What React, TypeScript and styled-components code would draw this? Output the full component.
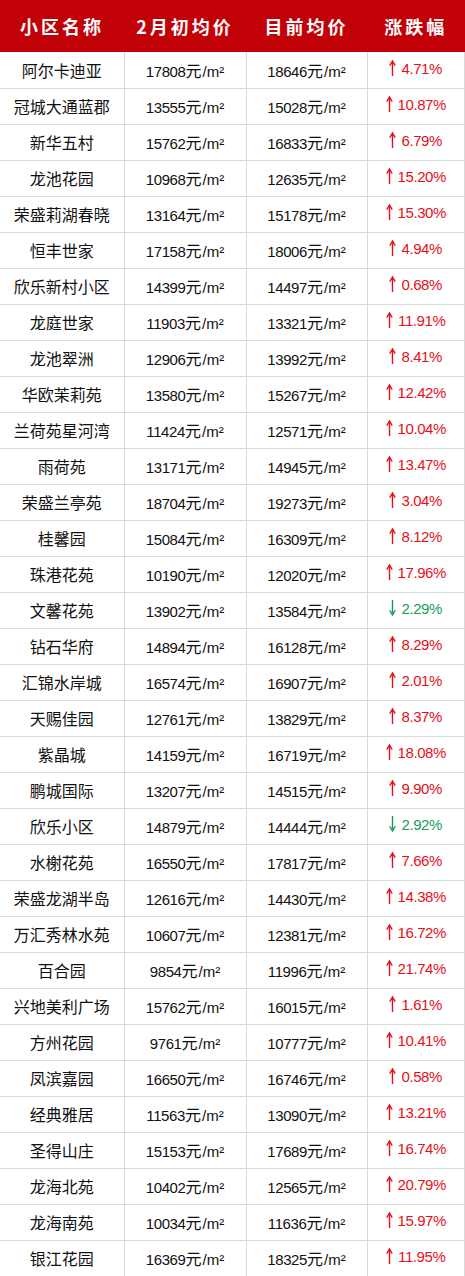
import React from "react";
import styled, { createGlobalStyle } from "styled-components";

const GlobalStyle = createGlobalStyle`
  html, body {
    margin: 0;
    padding: 0;
    background: #ffffff;
  }
  body {
    font-family: "Liberation Sans", "Noto Sans CJK SC", sans-serif;
  }
`;

type Row = [string, number, number, number];

// name, 2月初均价, 目前均价, 涨跌幅（负数为下跌）
const rows: Row[] = [
  ["阿尔卡迪亚", 17808, 18646, 4.71],
  ["冠城大通蓝郡", 13555, 15028, 10.87],
  ["新华五村", 15762, 16833, 6.79],
  ["龙池花园", 10968, 12635, 15.2],
  ["荣盛莉湖春晓", 13164, 15178, 15.3],
  ["恒丰世家", 17158, 18006, 4.94],
  ["欣乐新村小区", 14399, 14497, 0.68],
  ["龙庭世家", 11903, 13321, 11.91],
  ["龙池翠洲", 12906, 13992, 8.41],
  ["华欧茉莉苑", 13580, 15267, 12.42],
  ["兰荷苑星河湾", 11424, 12571, 10.04],
  ["雨荷苑", 13171, 14945, 13.47],
  ["荣盛兰亭苑", 18704, 19273, 3.04],
  ["桂馨园", 15084, 16309, 8.12],
  ["珠港花苑", 10190, 12020, 17.96],
  ["文馨花苑", 13902, 13584, -2.29],
  ["钻石华府", 14894, 16128, 8.29],
  ["汇锦水岸城", 16574, 16907, 2.01],
  ["天赐佳园", 12761, 13829, 8.37],
  ["紫晶城", 14159, 16719, 18.08],
  ["鹏城国际", 13207, 14515, 9.9],
  ["欣乐小区", 14879, 14444, -2.92],
  ["水榭花苑", 16550, 17817, 7.66],
  ["荣盛龙湖半岛", 12616, 14430, 14.38],
  ["万汇秀林水苑", 10607, 12381, 16.72],
  ["百合园", 9854, 11996, 21.74],
  ["兴地美利广场", 15762, 16015, 1.61],
  ["方州花园", 9761, 10777, 10.41],
  ["凤滨嘉园", 16650, 16746, 0.58],
  ["经典雅居", 11563, 13090, 13.21],
  ["圣得山庄", 15153, 17689, 16.74],
  ["龙海北苑", 10402, 12565, 20.79],
  ["龙海南苑", 10034, 11636, 15.97],
  ["银江花园", 16369, 18325, 11.95],
];

const UP = "#e60f19";
const DOWN = "#1a9b5c";

const Arrow: React.FC<{ down?: boolean; color: string }> = ({ down, color }) => (
  <svg
    width="7"
    height="16"
    viewBox="0 0 7 16"
    style={{ transform: down ? "rotate(180deg)" : undefined }}
  >
    <path d="M3.5 1.5 V16" stroke={color} strokeWidth="1.4" fill="none" />
    <path d="M0.8 5.6 L3.5 1 L6.2 5.6" stroke={color} strokeWidth="1.4" fill="none" />
  </svg>
);

const Price: React.FC<{ value: number }> = ({ value }) => (
  <>
    <Num>{value}</Num>元<Unit>/m²</Unit>
  </>
);

const App: React.FC = () => (
  <>
    <GlobalStyle />
    <Table>
      <colgroup>
        <col style={{ width: 124 }} />
        <col style={{ width: 122 }} />
        <col style={{ width: 121 }} />
        <col />
      </colgroup>
      <thead>
        <tr>
          <HeadCell>小区名称</HeadCell>
          <HeadCell>2月初均价</HeadCell>
          <HeadCell>目前均价</HeadCell>
          <HeadCell>涨跌幅</HeadCell>
        </tr>
      </thead>
      <tbody>
        {rows.map(([name, before, now, change]) => {
          const down = change < 0;
          const color = down ? DOWN : UP;
          return (
            <BodyRow key={name}>
              <Cell>{name}</Cell>
              <Cell>
                <Price value={before} />
              </Cell>
              <Cell>
                <Price value={now} />
              </Cell>
              <Cell>
                <Change color={color}>
                  <Arrow down={down} color={color} />
                  <Num>{Math.abs(change).toFixed(2)}%</Num>
                </Change>
              </Cell>
            </BodyRow>
          );
        })}
      </tbody>
    </Table>
  </>
);

export default App;

const Table = styled.table`
  width: 465px;
  border-collapse: collapse;
  table-layout: fixed;
`;

const HeadCell = styled.th`
  height: 52px;
  padding: 0;
  background: #c10008;
  color: #ffffff;
  font-family: "Noto Sans CJK SC", sans-serif;
  font-size: 18px;
  font-weight: 700;
  letter-spacing: 3px;
  text-align: center;
  vertical-align: middle;
`;

const BodyRow = styled.tr`
  height: 36px;
`;

const Cell = styled.td`
  padding: 0;
  border: 1px solid #d9d9d9;
  border-top: none;
  color: #111111;
  font-size: 16px;
  text-align: center;
  vertical-align: middle;
  white-space: nowrap;

  &:first-child {
    border-left: none;
  }
`;

const Num = styled.span`
  font-family: "Liberation Sans", sans-serif;
  font-size: 15px;
  letter-spacing: -0.4px;
`;

const Unit = styled.span`
  font-family: "Liberation Sans", sans-serif;
  font-size: 15px;
  margin-left: 1px;
`;

const Change = styled.span<{ color: string }>`
  display: inline-flex;
  align-items: center;
  gap: 5px;
  color: ${(p) => p.color};
  font-size: 16px;
`;
